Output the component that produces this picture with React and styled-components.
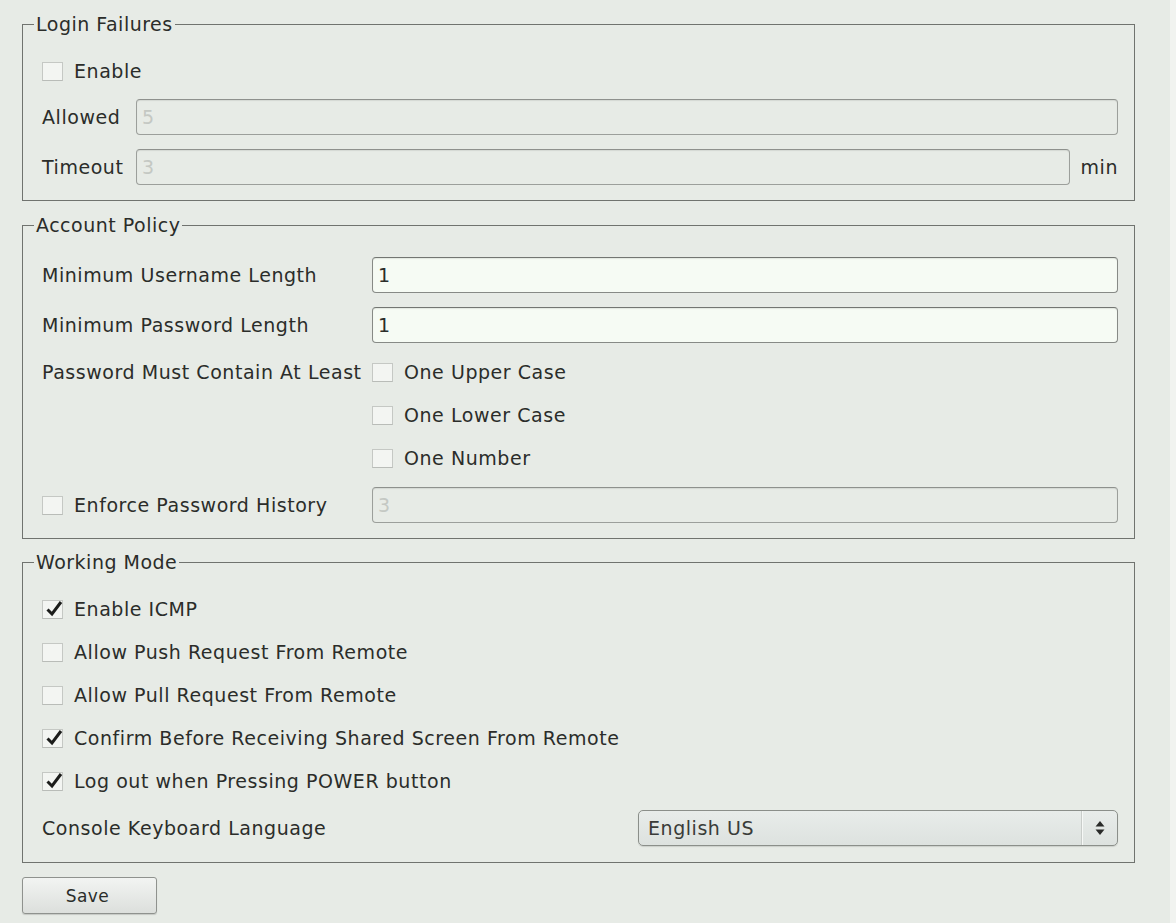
import React from "react";
import styled, { createGlobalStyle } from "styled-components";

const Global = createGlobalStyle`
  html, body { margin: 0; padding: 0; }
  body {
    background: linear-gradient(to right, #e7ebe6 1170px, #f1f3f0 1170px);
    font-family: "DejaVu Sans", "Liberation Sans", sans-serif;
    font-size: 19px;
    letter-spacing: 0.55px;
    color: #2b2d2a;
  }
`;

const Page = styled.div`
  padding: 13px 41px 30px 22px;
  display: flex;
  flex-direction: column;
`;

const Group = styled.fieldset`
  margin: ${(p) => p.$mt || 0}px 0 0 0;
  border: 1px solid #70736f;
  padding: ${(p) => p.$pt}px 16px ${(p) => p.$pb}px 19px;
  min-width: 0;
`;

const Legend = styled.legend`
  margin-left: -8px;
  padding: 0 2px;
  line-height: 22px;
  font-size: 19px;
  letter-spacing: 0.5px;
`;

const Stack = styled.div`
  display: flex;
  flex-direction: column;
  gap: ${(p) => p.$gap}px;
`;

const Row = styled.div`
  display: flex;
  align-items: center;
  height: ${(p) => p.$h || 36}px;
  gap: ${(p) => p.$gap || 0}px;
`;

const Label = styled.span`
  flex: 0 0 ${(p) => p.$w}px;
  white-space: nowrap;
`;

const TopLabel = styled.span`
  align-self: start;
  line-height: 30px;
  white-space: nowrap;
`;

const Unit = styled.span`
  flex: 0 0 auto;
`;

const TextBox = styled.div`
  flex: 1 1 auto;
  height: 36px;
  box-sizing: border-box;
  border: 1px solid ${(p) => (p.$disabled ? "#9c9f9b" : "#878a86")};
  border-top-color: ${(p) => (p.$disabled ? "#8e918d" : "#737672")};
  border-radius: 4px;
  background: ${(p) => (p.$disabled ? "#e7ebe6" : "#f6fbf4")};
  color: ${(p) => (p.$disabled ? "#c4c8c3" : "#2b2d2a")};
  display: flex;
  align-items: center;
  padding-left: 5px;
  box-shadow: inset 0 1px 1px rgba(0, 0, 0, 0.08);
`;

const Check = styled.label`
  display: flex;
  align-items: center;
  gap: 11px;
  height: ${(p) => p.$h || 30}px;
  white-space: nowrap;
`;

const Box = styled.span`
  position: relative;
  flex: 0 0 auto;
  width: 21px;
  height: 19px;
  box-sizing: border-box;
  border: 1px solid #c5c8c4;
  border-bottom-color: #b9bcb8;
  background: #f3f5f2;
  display: inline-block;
  svg {
    position: absolute;
    left: 1px;
    top: -4px;
  }
`;

const PolicyGrid = styled.div`
  display: grid;
  grid-template-columns: 330px 1fr;
  align-items: center;
  row-gap: 14px;
`;

const ChoiceList = styled.div`
  display: flex;
  flex-direction: column;
  gap: 13px;
`;

const Select = styled.div`
  flex: 0 0 480px;
  height: 36px;
  box-sizing: border-box;
  border: 1px solid #8b8f8a;
  border-radius: 5px;
  background: linear-gradient(to bottom, #e8ecea 0%, #dde2df 100%);
  display: flex;
  align-items: stretch;
  box-shadow: 0 1px 1px rgba(0, 0, 0, 0.12);
`;

const SelectText = styled.span`
  flex: 1;
  display: flex;
  align-items: center;
  padding-left: 9px;
  color: #3a3c39;
`;

const SelectArrow = styled.span`
  flex: 0 0 34px;
  border-left: 1px solid #f6f8f6;
  box-shadow: -1px 0 0 #c9cdca;
  display: flex;
  align-items: center;
  justify-content: center;
`;

const Spread = styled.div`
  display: flex;
  align-items: center;
  justify-content: space-between;
  height: 36px;
  margin-top: 1px;
`;

const Actions = styled.div`
  margin-top: 14px;
`;

const SaveButton = styled.button`
  width: 135px;
  height: 37px;
  border: 1px solid #8f928e;
  border-radius: 3px;
  background: linear-gradient(to bottom, #f2f4f2 0%, #dcdfdc 100%);
  font-family: "DejaVu Sans", "Liberation Sans", sans-serif;
  font-size: 17px;
  letter-spacing: 0.4px;
  color: #2b2d2a;
  padding: 0 4px 0 0;
  box-shadow: 0 1px 1px rgba(0, 0, 0, 0.15);
`;

const Tick = () => (
  <svg width="20" height="21" viewBox="0 0 20 21">
    <path
      d="M3.5 12.5 L8 17 L17 5"
      fill="none"
      stroke="#1c1d1b"
      strokeWidth="3"
      strokeLinecap="butt"
      strokeLinejoin="miter"
    />
  </svg>
);

const CheckItem = ({ checked, children, h }) => (
  <Check $h={h}>
    <Box>{checked && <Tick />}</Box>
    <span>{children}</span>
  </Check>
);

const SpinArrows = () => (
  <svg width="10" height="16" viewBox="0 0 10 16">
    <path d="M5 1 L9.5 6.5 L0.5 6.5 Z" fill="#2a2b29" />
    <path d="M5 15 L9.5 9.5 L0.5 9.5 Z" fill="#2a2b29" />
  </svg>
);

export default function App() {
  return (
    <>
      <Global />
      <Page>
        <Group $pt={22} $pb={15}>
          <Legend>Login Failures</Legend>
          <Stack $gap={14}>
            <Row $h={28}>
              <CheckItem h={28}>Enable</CheckItem>
            </Row>
            <Row>
              <Label $w={94}>Allowed</Label>
              <TextBox $disabled>5</TextBox>
            </Row>
            <Row $gap={11}>
              <Label $w={83}>Timeout</Label>
              <TextBox $disabled>3</TextBox>
              <Unit>min</Unit>
            </Row>
          </Stack>
        </Group>

        <Group $mt={13} $pt={21} $pb={15}>
          <Legend>Account Policy</Legend>
          <PolicyGrid>
            <Label>Minimum Username Length</Label>
            <Row>
              <TextBox>1</TextBox>
            </Row>
            <Label>Minimum Password Length</Label>
            <Row>
              <TextBox>1</TextBox>
            </Row>
            <TopLabel>Password Must Contain At Least</TopLabel>
            <ChoiceList>
              <CheckItem>One Upper Case</CheckItem>
              <CheckItem>One Lower Case</CheckItem>
              <CheckItem>One Number</CheckItem>
            </ChoiceList>
            <CheckItem>Enforce Password History</CheckItem>
            <Row>
              <TextBox $disabled>3</TextBox>
            </Row>
          </PolicyGrid>
        </Group>

        <Group $mt={12} $pt={21} $pb={16}>
          <Legend>Working Mode</Legend>
          <Stack $gap={13}>
            <CheckItem checked>Enable ICMP</CheckItem>
            <CheckItem>Allow Push Request From Remote</CheckItem>
            <CheckItem>Allow Pull Request From Remote</CheckItem>
            <CheckItem checked>Confirm Before Receiving Shared Screen From Remote</CheckItem>
            <CheckItem checked>Log out when Pressing POWER button</CheckItem>
            <Spread>
              <span>Console Keyboard Language</span>
              <Select>
                <SelectText>English US</SelectText>
                <SelectArrow>
                  <SpinArrows />
                </SelectArrow>
              </Select>
            </Spread>
          </Stack>
        </Group>

        <Actions>
          <SaveButton>Save</SaveButton>
        </Actions>
      </Page>
    </>
  );
}
